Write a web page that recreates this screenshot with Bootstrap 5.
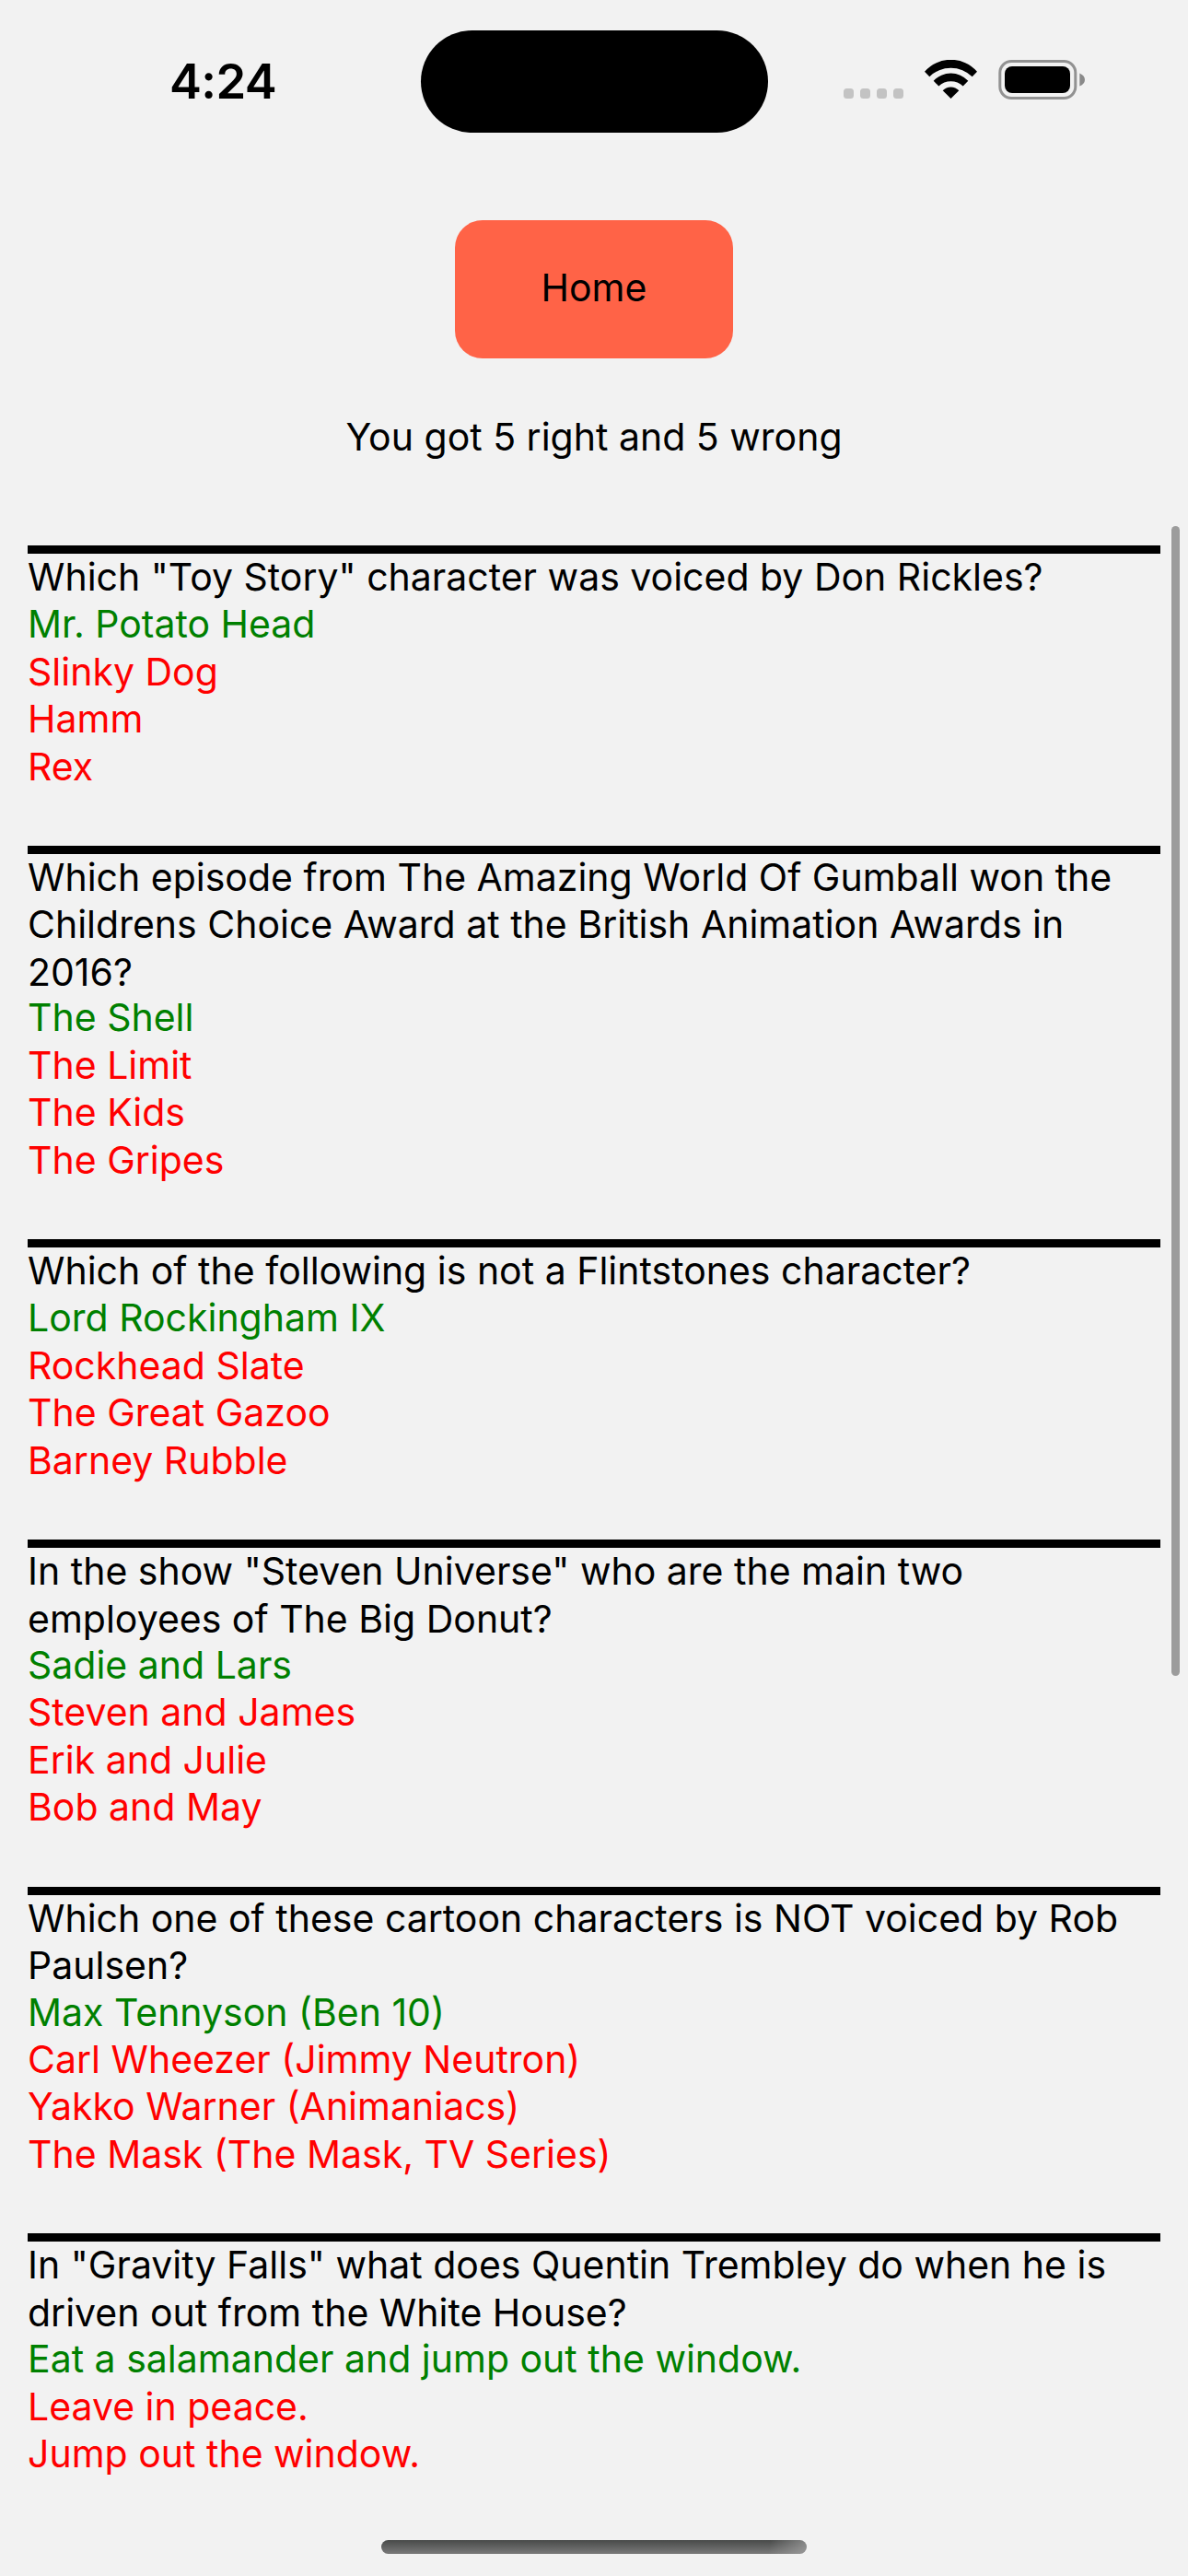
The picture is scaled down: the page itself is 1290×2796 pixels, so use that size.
<!DOCTYPE html>
<html lang="en">
<head>
<meta charset="utf-8">
<meta name="viewport" content="width=device-width, initial-scale=1">
<title>Quiz results</title>
<link href="https://cdn.jsdelivr.net/npm/bootstrap@5.3.0/dist/css/bootstrap.min.css" rel="stylesheet">
<style>
html, body { height: 2796px; overflow: hidden; }
body { background: #f2f2f2; color: #000; font-family: Inter, "Liberation Sans", sans-serif; font-size: 41px; line-height: 51.4px; }
.status-bar { height: 239px; padding-top: 33px; }
.status-side { width: 456.5px; height: 111px; }
.clock { font-size: 52.5px; font-weight: 600; line-height: 111px; padding-left: 184px; letter-spacing: -.6px; }
.island { width: 377px; height: 111px; background: #000; }
.status-icons { width: 263px; height: 43px; margin: 32px 0 0 82.5px; }
.btn-home { width: 302px; height: 150px; padding: 0 0 2px; border: 0; border-radius: 30px; background: #ff6347; color: #000; font-size: 41px; line-height: 51.4px; }
.btn-home:hover { background: #ff6347; color: #000; }
.score { margin-top: 60px; padding-bottom: 91.6px; }
.quiz-list { padding: 0 30px; }
.quiz-item { border-top: 9px solid #000; margin-bottom: 60px; }
.two-line { margin-bottom: -.9px; }
.three-line { margin-bottom: -1.8px; }
.right { color: #008000; }
.wrong { color: #f00; }
.scroll-thumb { top: 571px; right: 9px; width: 9px; height: 1248px; border-radius: 5px; background: #9c9c9c; }
.home-indicator { left: 414px; top: 2757px; width: 462px; height: 15px; border-radius: 8px; background: linear-gradient(100deg, transparent 91%, rgba(170,170,170,.65)), linear-gradient(#484a49, #7a7a7a); }
</style>
</head>
<body class="position-relative">
<header class="status-bar d-flex align-items-start">
  <div class="status-side clock">4:24</div>
  <div class="island rounded-pill"></div>
  <div class="status-side">
    <svg class="status-icons d-block" viewBox="916 65 263 43" aria-hidden="true">
      <g fill="#c3c3c3">
        <rect x="916" y="96" width="11" height="11" rx="3.5"/>
        <rect x="934" y="96" width="11" height="11" rx="3.5"/>
        <rect x="952" y="96" width="11" height="11" rx="3.5"/>
        <rect x="970" y="96" width="11" height="11" rx="3.5"/>
      </g>
      <path d="M1004 77.7A37.9 37.9 0 0 1 1061 77.7L1055.7 83.3A33 33 0 0 0 1009.3 83.3Z"/>
      <path d="M1013.7 87.7A25.8 25.8 0 0 1 1051.3 87.7L1045.7 93.5A19 19 0 0 0 1019.3 93.5Z"/>
      <path d="M1023.7 98.3A12 12 0 0 1 1041.3 98.3L1032.5 107Z"/>
      <rect x="1085.8" y="66.5" width="82" height="40" rx="12.5" fill="none" stroke="#929292" stroke-width="3"/>
      <rect x="1091" y="72" width="71" height="29" rx="8"/>
      <path d="M1172.3 79.5Q1178 82 1178 86.5T1172.3 93.5Z" fill="#8a8a8a"/>
    </svg>
  </div>
</header>

<section class="d-flex flex-column align-items-center">
  <button type="button" class="btn btn-home">Home</button>
  <div class="score">You got 5 right and 5 wrong</div>
</section>

<main class="quiz-list">
  <article class="quiz-item">
    <div>Which "Toy Story" character was voiced by Don Rickles?</div>
    <div class="right">Mr. Potato Head</div>
    <div class="wrong">Slinky Dog</div>
    <div class="wrong">Hamm</div>
    <div class="wrong">Rex</div>
  </article>
  <article class="quiz-item">
    <div class="three-line">Which episode from The Amazing World Of Gumball won the<br>Childrens Choice Award at the British Animation Awards in<br>2016?</div>
    <div class="right">The Shell</div>
    <div class="wrong">The Limit</div>
    <div class="wrong">The Kids</div>
    <div class="wrong">The Gripes</div>
  </article>
  <article class="quiz-item">
    <div>Which of the following is not a Flintstones character?</div>
    <div class="right">Lord Rockingham IX</div>
    <div class="wrong">Rockhead Slate</div>
    <div class="wrong">The Great Gazoo</div>
    <div class="wrong">Barney Rubble</div>
  </article>
  <article class="quiz-item">
    <div class="two-line">In the show "Steven Universe" who are the main two<br>employees of The Big Donut?</div>
    <div class="right">Sadie and Lars</div>
    <div class="wrong">Steven and James</div>
    <div class="wrong">Erik and Julie</div>
    <div class="wrong">Bob and May</div>
  </article>
  <article class="quiz-item">
    <div class="two-line">Which one of these cartoon characters is NOT voiced by Rob<br>Paulsen?</div>
    <div class="right">Max Tennyson (Ben 10)</div>
    <div class="wrong">Carl Wheezer (Jimmy Neutron)</div>
    <div class="wrong">Yakko Warner (Animaniacs)</div>
    <div class="wrong">The Mask (The Mask, TV Series)</div>
  </article>
  <article class="quiz-item">
    <div class="two-line">In "Gravity Falls" what does Quentin Trembley do when he is<br>driven out from the White House?</div>
    <div class="right">Eat a salamander and jump out the window.</div>
    <div class="wrong">Leave in peace.</div>
    <div class="wrong">Jump out the window.</div>
  </article>
</main>

<div class="scroll-thumb position-absolute"></div>
<div class="home-indicator position-absolute"></div>
<script src="https://cdn.jsdelivr.net/npm/bootstrap@5.3.0/dist/js/bootstrap.bundle.min.js"></script>
</body>
</html>
